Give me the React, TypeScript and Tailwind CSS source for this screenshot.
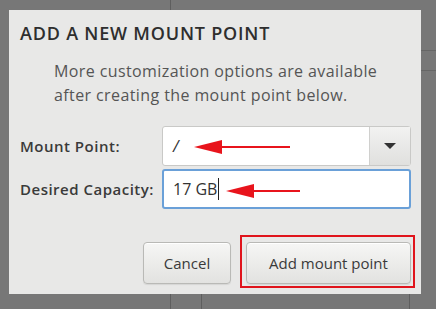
import React from "react";

function Arrow({ width }: { width: number }) {
  return (
    <svg width={width} height="16" viewBox={`0 0 ${width} 16`} className="block">
      <polygon points="0,8 28,1 28,15" fill="#e8141c" />
      <rect x="26" y="7" width={width - 26} height="2" fill="#e8141c" />
    </svg>
  );
}

function Btn({ children, className }: { children: React.ReactNode; className?: string }) {
  return (
    <button
      className={
        "h-[42px] rounded-[4px] border border-[#b9b9b6] bg-gradient-to-b from-[#f6f6f5] to-[#e2e2e0] text-[15px] text-[#3a3a3a] shadow-[inset_0_1px_0_#fff,0_1px_1px_rgba(0,0,0,0.08)] " +
        (className ?? "")
      }
    >
      {children}
    </button>
  );
}

export default function App() {
  return (
    <div
      className="relative h-[309px] w-[436px] overflow-hidden bg-[#777777]"
      style={{ fontFamily: "'Open Sans', 'Noto Sans', sans-serif" }}
    >
      {/* desktop behind the dialog */}
      <div className="absolute left-[170px] top-0 h-[10px] w-px bg-[#5e5e5e]" />
      <div className="absolute left-[421px] top-[50px] h-px w-[15px] bg-[#666]" />
      <div className="absolute left-[421px] top-[70px] h-px w-[15px] bg-[#666]" />
      <div className="absolute left-[170px] top-[294px] h-[15px] w-px bg-[#5e5e5e]" />
      <div className="absolute left-[201px] top-[294px] h-[15px] w-px bg-[#5e5e5e]" />
      <div className="absolute left-[409px] top-[294px] h-[15px] w-px bg-[#5e5e5e]" />

      <div className="ml-[9px] mt-[10px] flex h-[284px] w-[412px] flex-col bg-[#e8e8e7] pl-[11px] pr-[10px]">
        <h1 className="pt-[11px] text-[18px] font-semibold leading-[24px] tracking-[0.8px] text-[#2e2e2e]">
          ADD A NEW MOUNT POINT
        </h1>
        <p className="mt-[14px] pl-[34px] text-[16px] leading-[24px] tracking-[0.4px] text-[#555]">
          More customization options are available
          <br />
          after creating the mount point below.
        </p>

        <div className="mt-[19px] grid grid-cols-[142px_249px] gap-y-[3px]">
          <label className="flex items-center text-[15px] font-semibold tracking-[0.5px] text-[#3a3a3a]">Mount Point:</label>
          <div className="relative flex h-[40px] rounded-[3px] border border-[#c9c9c7] bg-white">
            <div className="flex flex-1 items-center pl-[10px] text-[16px] text-[#333]">
              <span className="italic">/</span>
            </div>
            <div className="flex w-[41px] items-center justify-center border-l border-[#d0d0ce] bg-gradient-to-b from-[#f2f2f1] to-[#e0e0de]">
              <svg width="12" height="6" viewBox="0 0 12 6">
                <polygon points="0,0 12,0 6,6" fill="#333" />
              </svg>
            </div>
            <div className="absolute left-[31px] top-[12px]">
              <Arrow width={96} />
            </div>
          </div>

          <label className="flex items-center text-[15px] font-semibold tracking-[0.5px] text-[#3a3a3a]">Desired Capacity:</label>
          <div className="relative flex h-[40px] items-center rounded-[3px] border-2 border-[#6aa0d8] bg-white pl-[9px] text-[16px] text-[#333]">
            <span>17 GB</span>
            <span className="ml-px h-[22px] w-px bg-[#222]" />
            <div className="absolute left-[62px] top-[12px]">
              <Arrow width={74} />
            </div>
          </div>
        </div>

        <div className="mt-[33px] flex justify-end gap-[15px]">
          <Btn className="w-[88px]">Cancel</Btn>
          <div className="relative">
            <Btn className="w-[165px]">Add mount point</Btn>
            <span className="pointer-events-none absolute -bottom-[4px] -left-[6px] -right-[4px] -top-[7px] border-2 border-[#e0141c]" />
          </div>
        </div>
      </div>
    </div>
  );
}
